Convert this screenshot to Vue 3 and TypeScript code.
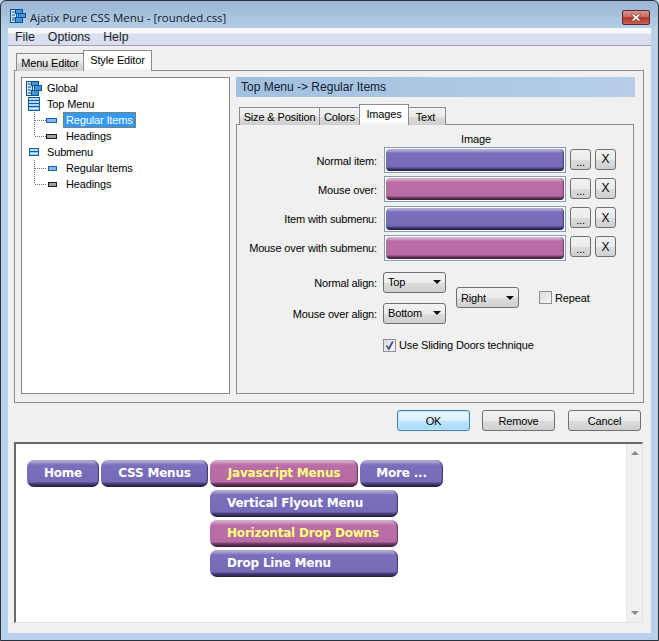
<script setup lang="ts">
interface TreeRow { label: string; icon: string; depth: number; connector?: string; selected?: boolean }
const tree: TreeRow[] = [
  { label: 'Global', icon: 'global', depth: 0 },
  { label: 'Top Menu', icon: 'top', depth: 0 },
  { label: 'Regular Items', icon: 'blue-big', depth: 1, connector: 'mid', selected: true },
  { label: 'Headings', icon: 'gray-big', depth: 1, connector: 'end' },
  { label: 'Submenu', icon: 'sub', depth: 0 },
  { label: 'Regular Items', icon: 'blue-small', depth: 1, connector: 'mid' },
  { label: 'Headings', icon: 'gray-small', depth: 1, connector: 'end' },
]
const imageRows = [
  { label: 'Normal item:', kind: 'blue' },
  { label: 'Mouse over:', kind: 'pink' },
  { label: 'Item with submenu:', kind: 'blue' },
  { label: 'Mouse over with submenu:', kind: 'pink' },
]
const subTabs = ['Size & Position', 'Colors', 'Images', 'Text']
const topItems = [
  { label: 'Home', width: 72 },
  { label: 'CSS Menus', width: 107 },
  { label: 'Javascript Menus', width: 148, hot: true },
  { label: 'More ...', width: 83 },
]
const dropItems = [
  { label: 'Vertical Flyout Menu' },
  { label: 'Horizontal Drop Downs', hot: true },
  { label: 'Drop Line Menu' },
]
</script>

<template>
  <div class="window">
    <div class="titlebar">
      <svg class="title-icon" width="16" height="14" viewBox="0 0 16 14">
        <g fill="#3f97dc" stroke="#0f4f8f" stroke-width="1">
          <rect x="0.5" y="0.5" width="6" height="13" fill="#cfe5f7" />
          <rect x="5.5" y="0.5" width="7" height="4" />
          <rect x="8.5" y="4.5" width="7" height="4" />
          <rect x="5.5" y="8.5" width="7" height="5" />
        </g>
        <path d="M2 3h3M2 6h3M2 9h3M2 11h3" stroke="#0f4f8f" />
      </svg>
      <span class="title-text">Ajatix Pure CSS Menu - [rounded.css]</span>
      <div class="close">
        <svg width="14" height="9" viewBox="0 0 14 9">
          <path d="M2 1 L5 1 L7 3 L9 1 L12 1 L9 4.5 L12 8 L9 8 L7 6 L5 8 L2 8 L5 4.5 Z" fill="#f4efee" stroke="#6d2a25" stroke-width="0.6" />
        </svg>
      </div>
    </div>

    <div class="client">
      <div class="menubar">
        <span>File</span><span>Options</span><span>Help</span>
      </div>

      <div class="tabstrip main-tabs">
        <div class="tab">Menu Editor</div>
        <div class="tab active">Style Editor</div>
      </div>

      <div class="main-panel">
        <div class="tree">
          <div v-for="(row, i) in tree" :key="i" class="tree-row" :class="{ child: row.depth === 1 }">
            <svg v-if="row.connector" class="connector" width="12" height="16" viewBox="0 0 12 16">
              <path :d="row.connector === 'mid' ? 'M0.5 0V16M1 8.5H12' : 'M0.5 0V8M1 8.5H12'" stroke="#6f6f6f" stroke-width="1" stroke-dasharray="1 1" fill="none" />
            </svg>
            <span class="tree-icon" :class="{ small: row.depth === 1 }">
              <svg v-if="row.icon === 'global'" width="16" height="15" viewBox="0 0 16 15">
                <g fill="#3f97dc" stroke="#0f4f8f">
                  <rect x="0.5" y="0.5" width="6" height="14" fill="#cfe5f7" />
                  <rect x="5.5" y="0.5" width="7" height="4" />
                  <rect x="8.5" y="4.5" width="7" height="5" />
                  <rect x="5.5" y="9.5" width="7" height="5" />
                </g>
                <path d="M2 3h3M2 6h3M2 9h3M2 12h3" stroke="#0f4f8f" />
              </svg>
              <svg v-else-if="row.icon === 'top'" width="12" height="14" viewBox="0 0 12 14">
                <rect x="0.5" y="0.5" width="11" height="13" fill="#8ec4ee" stroke="#0f5ea8" />
                <path d="M1 3.5h10M1 6.5h10M1 9.5h10" stroke="#0f5ea8" />
                <path d="M1 2h10M1 5h10M1 8h10M1 11.5h10" stroke="#d9edfb" />
              </svg>
              <svg v-else-if="row.icon === 'sub'" width="10" height="8" viewBox="0 0 10 8">
                <rect x="0.5" y="0.5" width="9" height="7" fill="#8ec4ee" stroke="#0f5ea8" />
                <path d="M1 3.5h8" stroke="#0f5ea8" />
                <path d="M1 2h8M1 5.5h8" stroke="#d9edfb" />
              </svg>
              <span v-else class="mini" :class="row.icon"></span>
            </span>
            <span class="tree-label" :class="{ selected: row.selected }">{{ row.label }}</span>
          </div>
        </div>

        <div class="right-col">
          <div class="pane-header">Top Menu -&gt; Regular Items</div>
          <div class="tabstrip sub-tabs">
            <div v-for="t in subTabs" :key="t" class="tab" :class="{ active: t === 'Images' }">{{ t }}</div>
          </div>
          <div class="sub-panel">
            <div class="image-heading">Image</div>
            <div class="image-rows">
              <div v-for="r in imageRows" :key="r.label" class="image-row">
                <span class="row-label">{{ r.label }}</span>
                <div class="swatch"><div class="bar" :class="r.kind"></div></div>
                <div class="btn small-btn dots">...</div>
                <div class="btn small-btn">X</div>
              </div>
            </div>

            <div class="align-block">
              <div class="align-col">
                <div class="align-row">
                  <span class="row-label">Normal align:</span>
                  <div class="select"><span>Top</span><i class="arrow"></i></div>
                </div>
                <div class="align-row">
                  <span class="row-label">Mouse over align:</span>
                  <div class="select"><span>Bottom</span><i class="arrow"></i></div>
                </div>
              </div>
              <div class="select right-select"><span>Right</span><i class="arrow"></i></div>
              <label class="check repeat"><span class="box"></span>Repeat</label>
            </div>

            <label class="check sliding">
              <span class="box">
                <svg width="11" height="11" viewBox="0 0 11 11">
                  <path d="M2.5 5.5 L4.8 9 L8.8 1.5" fill="none" stroke="#44578f" stroke-width="1.8" />
                </svg>
              </span>
              Use Sliding Doors technique
            </label>
          </div>
        </div>
      </div>

      <div class="dialog-buttons">
        <div class="btn action default">OK</div>
        <div class="btn action">Remove</div>
        <div class="btn action cancel">Cancel</div>
      </div>

      <div class="preview">
        <div class="preview-canvas">
          <div class="top-row">
            <div v-for="item in topItems" :key="item.label" class="menu-item centered" :class="{ hot: item.hot }" :style="{ width: item.width + 'px' }">{{ item.label }}</div>
          </div>
          <div class="drop">
            <div v-for="item in dropItems" :key="item.label" class="menu-item" :class="{ hot: item.hot }">{{ item.label }}</div>
          </div>
        </div>
        <div class="scrollbar">
          <i class="sb-up"></i>
          <i class="sb-down"></i>
        </div>
      </div>
    </div>
  </div>
</template>

<style>
html, body { margin: 0; padding: 0; background: #b9d1ea; }
</style>

<style scoped>
.window {
  box-sizing: border-box;
  width: 659px;
  height: 641px;
  padding: 0 7px 7px;
  border: 1px solid #2c3338;
  border-radius: 6px 6px 0 0;
  background: linear-gradient(180deg, #9ab5d2 0, #a9c3de 15px, #b9d1ea 30px);
  font-family: "Liberation Sans", Arial, sans-serif;
  font-size: 11px;
  letter-spacing: -0.15px;
  color: #000;
  overflow: hidden;
  display: flex;
  flex-direction: column;
}
.titlebar {
  height: 27px;
  flex: none;
  display: flex;
  align-items: center;
  padding: 3px 1px 0 2px;
  box-sizing: border-box;
}
.title-icon { margin-right: 4px; }
.title-text {
  font-family: "Open Sans", sans-serif;
  font-size: 11.45px;
  letter-spacing: 0;
  color: #10202f;
  flex: 1;
  margin-top: 2px;
}
.close {
  width: 28px;
  height: 15px;
  box-sizing: border-box;
  margin-top: 3px;
  border: 1px solid #5a2730;
  border-radius: 2px;
  background: linear-gradient(180deg, #d9968c 0, #c96a5d 45%, #b03a2c 50%, #c9604f 100%);
  display: flex;
  align-items: center;
  justify-content: center;
}
.client {
  flex: 1;
  background: #f0f0f0;
  display: flex;
  flex-direction: column;
  min-height: 0;
}
.menubar {
  height: 18px;
  flex: none;
  box-sizing: border-box;
  display: flex;
  align-items: center;
  gap: 13px;
  padding: 0 7px;
  border-bottom: 1px solid #a0a0b0;
  background: linear-gradient(180deg, #f6f8fd 0, #f6f8fd 5px, #dae0f1 6px, #d9dff0 100%);
  color: #1e1e2a;
  font-size: 12.3px;
  letter-spacing: 0;
}
.tabstrip {
  display: flex;
  align-items: flex-end;
  flex: none;
}
.main-tabs { height: 25px; padding-left: 8px; margin-bottom: -1px; position: relative; z-index: 1; }
.sub-tabs { height: 28px; padding-left: 3px; margin-bottom: -1px; position: relative; z-index: 1; }
.tab {
  box-sizing: border-box;
  height: 18px;
  padding: 0 4px;
  border: 1px solid #898c95;
  border-bottom: 0;
  background: linear-gradient(180deg, #f2f2f2 0, #ebebeb 50%, #dddddd 51%, #cfcfcf 100%);
  display: flex;
  align-items: center;
  justify-content: center;
  white-space: nowrap;
  margin-right: -1px;
}
.tab.active {
  height: 21px;
  padding-bottom: 2px;
  background: linear-gradient(180deg, #fff 0, #fff 80%, #f0f0f0 100%);
  z-index: 1;
}
.main-tabs .tab:nth-child(1) { width: 68px; }
.main-tabs .tab:nth-child(2) { width: 69px; }
.sub-tabs .tab:nth-child(1) { width: 81px; }
.sub-tabs .tab:nth-child(2) { width: 41px; }
.sub-tabs .tab:nth-child(3) { width: 50px; }
.sub-tabs .tab:nth-child(4) { width: 38px; padding: 0 7px 0 4px; }
.main-panel {
  box-sizing: border-box;
  margin: 0 7px 0 6px;
  height: 333px;
  flex: none;
  border: 1px solid #898c95;
  padding: 6px 8px 8px 6px;
  display: flex;
  gap: 6px;
}
.tree {
  box-sizing: border-box;
  width: 209px;
  height: 317px;
  flex: none;
  border: 1px solid #828790;
  background: #fff;
  padding-top: 2px;
}
.tree-row {
  height: 16px;
  display: flex;
  align-items: center;
  padding-left: 4px;
}
.tree-row.child { padding-left: 12px; }
.tree-icon {
  width: 16px;
  height: 16px;
  margin-right: 2px;
  display: flex;
  align-items: center;
  justify-content: center;
  flex: none;
}
.tree-icon.small { width: 12px; margin-right: 5px; justify-content: flex-start; }
.connector { flex: none; }
.mini { display: block; box-sizing: border-box; height: 5px; border: 1px solid #1b1b1b; }
.mini.blue-big { width: 11px; background: #7fb8ea; border-color: #1560aa; }
.mini.gray-big { width: 11px; background: #a0a0a0; }
.mini.blue-small { width: 9px; margin-left: 2px; background: #7fb8ea; border-color: #1560aa; }
.mini.gray-small { width: 9px; margin-left: 2px; background: #a0a0a0; }
.tree-label { padding: 0 2px; line-height: 14px; border: 1px solid transparent; white-space: nowrap; }
.tree-label.selected { background: #3399ff; color: #fff; border: 1px dotted #b66a00; }
.right-col { flex: 1; min-width: 0; display: flex; flex-direction: column; }
.pane-header {
  height: 20px;
  flex: none;
  background: linear-gradient(90deg, #a2c0df, #b6cee8);
  display: flex;
  align-items: center;
  padding-left: 5px;
  font-size: 12px;
  letter-spacing: 0;
  color: #10202f;
}
.sub-panel {
  box-sizing: border-box;
  flex: none;
  height: 270px;
  width: 398px;
  border: 1px solid #898c95;
  padding: 7px 0 0;
}
.image-heading { text-align: center; padding-left: 82px; height: 15px; line-height: 15px; }
.image-rows { display: flex; flex-direction: column; gap: 3.34px; }
.image-row { display: flex; align-items: center; height: 26px; }
.row-label { width: 140px; flex: none; text-align: right; white-space: nowrap; padding-top: 1px; }
.swatch {
  box-sizing: border-box;
  width: 182px;
  height: 26px;
  margin-left: 7px;
  margin-right: 4px;
  border: 1px solid #7f9db9;
  background: #fff;
  padding: 1px;
}
.bar { height: 22px; border-radius: 4px; box-shadow: inset -1px 0 1px rgba(20, 15, 50, 0.5); }
.bar.blue { background: linear-gradient(180deg, #c0bbdd 0, #a49ed0 2px, #7a6fbb 4px, #746ab8 18px, #4f4888 19px, #1e1a3c 22px); }
.bar.pink { background: linear-gradient(180deg, #dcbcd5 0, #cfa0c6 2px, #bb6da8 4px, #b86aa3 18px, #7e4672 19px, #3a1833 22px); }
.btn {
  box-sizing: border-box;
  border: 1px solid #707070;
  border-radius: 3px;
  background: linear-gradient(180deg, #f2f2f2 0, #ebebeb 50%, #dddddd 51%, #cfcfcf 100%);
  display: flex;
  align-items: center;
  justify-content: center;
}
.small-btn { width: 21px; height: 21px; margin-right: 4px; margin-top: -2px; font-size: 12px; }
.dots { font-size: 11px; align-items: flex-end; padding-bottom: 1px; }
.align-block { display: flex; margin-top: 11px; align-items: center; }
.align-col { display: flex; flex-direction: column; gap: 10px; }
.align-row { display: flex; align-items: center; }
.select {
  box-sizing: border-box;
  width: 63px;
  height: 21px;
  margin-left: 6px;
  border: 1px solid #707070;
  border-radius: 3px;
  background: linear-gradient(180deg, #f2f2f2 0, #ebebeb 50%, #dddddd 51%, #cfcfcf 100%);
  display: flex;
  align-items: center;
  justify-content: space-between;
  padding: 0 4px;
}
.right-select { margin-left: 10px; }
.arrow {
  display: block;
  width: 0;
  height: 0;
  border-left: 4px solid transparent;
  border-right: 4px solid transparent;
  border-top: 4px solid #111;
}
.check { display: flex; align-items: center; gap: 3px; white-space: nowrap; }
.box {
  box-sizing: border-box;
  width: 13px;
  height: 13px;
  flex: none;
  border: 1px solid #8e8f8f;
  background: linear-gradient(135deg, #dcdcdc, #f6f6f6);
  display: flex;
  align-items: center;
  justify-content: center;
}
.repeat { margin-left: 20px; }
.sliding { margin: 15px 0 0 146px; }
.dialog-buttons {
  height: 39px;
  flex: none;
  box-sizing: border-box;
  display: flex;
  justify-content: flex-end;
  gap: 12px;
  padding: 7px 10px 0 0;
}
.action { width: 73px; height: 21px; }
.cancel { margin-left: 1px; }
.default {
  border-color: #3c7fb1;
  box-shadow: inset 0 0 0 1px #bfe8fb;
  background: linear-gradient(180deg, #eaf6fd 0, #d9f0fc 50%, #bee6fd 51%, #a7d9f5 100%);
}
.preview {
  box-sizing: border-box;
  height: 181px;
  flex: none;
  margin: 0 8px 0 6px;
  display: flex;
  border-top: 2px solid #696969;
  border-left: 2px solid #696969;
  border-bottom: 1px solid #e3e3e3;
  border-right: 1px solid #e3e3e3;
}
.preview-canvas { flex: 1; background: #fff; padding: 16px 0 0 11px; }
.top-row { display: flex; gap: 2px; }
.drop { display: flex; flex-direction: column; gap: 3px; margin: 3px 0 0 183px; width: 188px; }
.menu-item {
  box-sizing: border-box;
  height: 27px;
  border-radius: 7px;
  padding: 0 0 1px 17px;
  display: flex;
  align-items: center;
  background: linear-gradient(180deg, #c0bbdd 0, #a49ed0 2px, #7a6fbb 5px, #746ab8 22px, #4f4888 23px, #1e1a3c 27px);
  box-shadow: inset -1px 0 1px rgba(20, 15, 50, 0.55);
  color: #fff;
  font-family: "DejaVu Sans", sans-serif;
  font-weight: bold;
  font-size: 12px;
  letter-spacing: -0.2px;
  white-space: nowrap;
}
.menu-item.centered { justify-content: center; padding-left: 0; }
.menu-item.hot {
  background: linear-gradient(180deg, #dcbcd5 0, #cfa0c6 2px, #bb6da8 5px, #b86aa3 22px, #7e4672 23px, #3a1833 27px);
  color: #ffff80;
}
.scrollbar {
  width: 16px;
  flex: none;
  background: #f0f0f0;
  border-left: 1px solid #e6e6e6;
  box-sizing: border-box;
  display: flex;
  flex-direction: column;
  justify-content: space-between;
  align-items: center;
  padding: 7px 0;
}
.sb-up, .sb-down {
  display: block;
  width: 0;
  height: 0;
  border-left: 4px solid transparent;
  border-right: 4px solid transparent;
}
.sb-up { border-bottom: 4px solid #8a8a8a; }
.sb-down { border-top: 4px solid #8a8a8a; }
</style>
